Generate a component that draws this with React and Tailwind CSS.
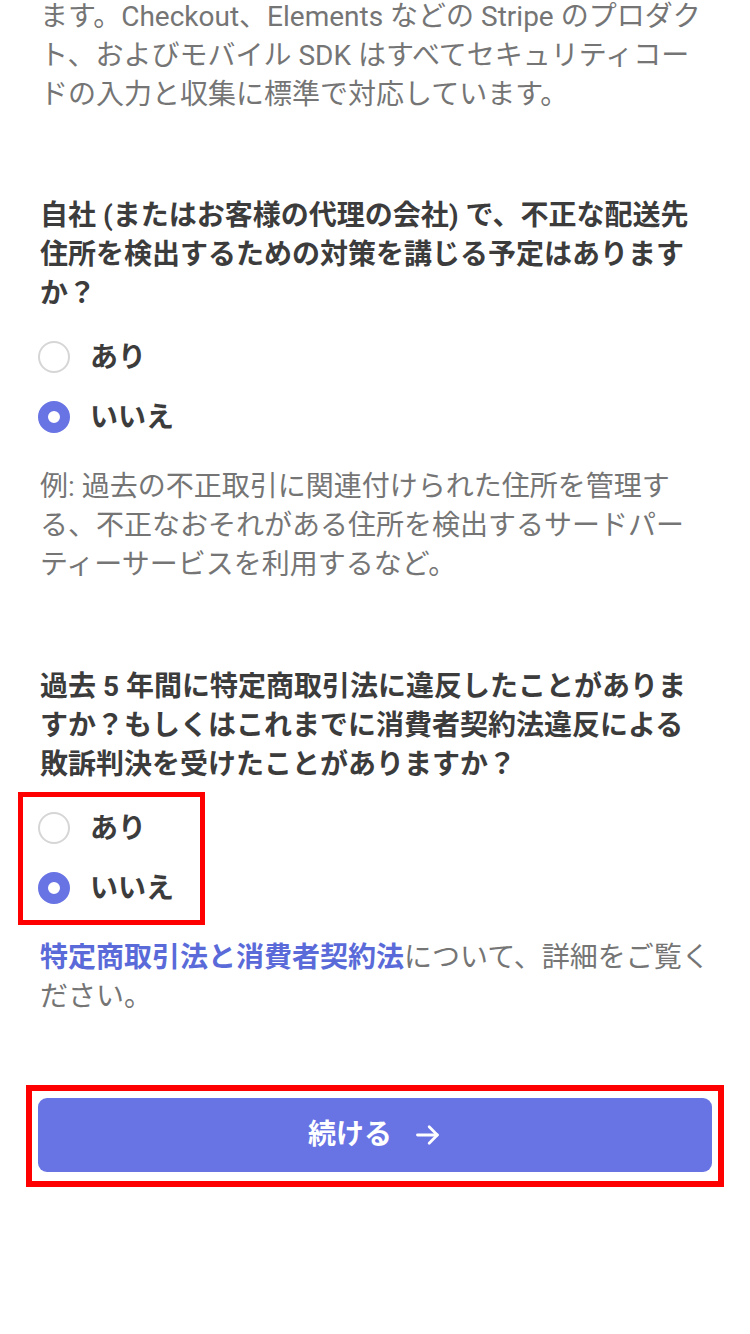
import React from "react";

const font = { fontFamily: 'Roboto, "Noto Sans CJK JP", sans-serif' };

function Radio({ checked, label }) {
  return (
    <div className="flex items-center h-[60px] ml-[-2px]">
      {checked ? (
        <span className="w-[32px] h-[32px] rounded-full border-[10px] border-[#6873e4] bg-white shrink-0" />
      ) : (
        <span className="w-[32px] h-[32px] rounded-full border-2 border-[#d6d6d6] bg-white shrink-0" />
      )}
      <span className="ml-[20px] text-[28px] font-bold text-[#3c3c3c] leading-[39px]">{label}</span>
    </div>
  );
}

export default function App() {
  return (
    <div className="w-[750px] h-[1334px] bg-white overflow-hidden relative" style={font}>
      <div className="px-[40px] mt-[-3px]">
        <p className="text-[28px] leading-[39px] text-[#757575]">
          ます。Checkout、Elements などの Stripe のプロダクト、およびモバイル SDK はすべてセキュリティコードの入力と収集に標準で対応しています。
        </p>
        <h2 className="mt-[82px] text-[28px] leading-[39px] font-bold text-[#3c3c3c]">
          自社 (またはお客様の代理の会社) で、不正な配送先住所を検出するための対策を講じる予定はありますか？
        </h2>
        <div className="mt-[14px]">
          <Radio label="あり" />
          <Radio checked label="いいえ" />
        </div>
        <p className="mt-[20px] text-[28px] leading-[39px] text-[#757575]">
          例: 過去の不正取引に関連付けられた住所を管理する、不正なおそれがある住所を検出するサードパーティーサービスを利用するなど。
        </p>
        <h2 className="mt-[83px] text-[28px] leading-[39px] font-bold text-[#3c3c3c]">
          過去 5 年間に特定商取引法に違反したことがありますか？もしくはこれまでに消費者契約法違反による敗訴判決を受けたことがありますか？
        </h2>
        <div className="mt-[14px] relative">
          <Radio label="あり" />
          <Radio checked label="いいえ" />
          <div className="absolute left-[-22px] top-[-6px] w-[187px] h-[133px] border-[5px] border-[#ff0000] pointer-events-none" />
        </div>
        <p className="mt-[20px] text-[28px] leading-[39px] text-[#757575]">
          <span className="font-bold text-[#5a6bd9]">特定商取引法と消費者契約法</span>について、詳細をご覧ください。
        </p>
      </div>
      <div className="mt-[82px] px-[38px] relative">
        <button className="w-full h-[74px] rounded-[9px] bg-[#6873e4] flex items-center justify-center text-white text-[28px] font-bold">
          <span>続ける</span>
          <svg className="ml-[22px]" width="28" height="28" viewBox="0 0 24 24" fill="none" stroke="white" strokeWidth="2.4" strokeLinecap="round" strokeLinejoin="round">
            <path d="M3 12h17" />
            <path d="M13 5l7 7-7 7" />
          </svg>
        </button>
        <div className="absolute left-[26px] top-[-13px] w-[698px] h-[102px] border-[6px] border-[#ff0000] pointer-events-none" />
      </div>
    </div>
  );
}
